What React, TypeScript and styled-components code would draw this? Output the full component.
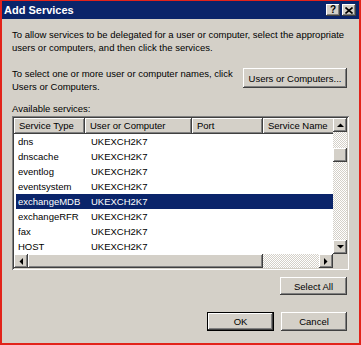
import React from 'react';
import styled, { createGlobalStyle, css } from 'styled-components';

const Global = createGlobalStyle`
  html, body { margin: 0; padding: 0; background: #fff; }
  *, *::before, *::after { box-sizing: border-box; }
`;

const FONT = `"Liberation Sans", Arial, sans-serif`;

const raised = css`
  background: #d4d0c8;
  box-shadow: inset -1px -1px #404040, inset 1px 1px #ffffff, inset -2px -2px #808080, inset 2px 2px #d4d0c8;
`;

const Frame = styled.div`
  width: 361px;
  height: 345px;
  border: 2px solid #e2231a;
  border-top-width: 1px;
  background: #d4d0c8;
  font-family: ${FONT};
  font-size: 9.5px;
  color: #000;
  display: flex;
  flex-direction: column;
  overflow: hidden;
`;

const TitleBar = styled.div`
  height: 18px;
  flex-shrink: 0;
  background: #0a246a;
  color: #fff;
  display: flex;
  align-items: center;
  justify-content: space-between;
  padding: 0 3px 0 2px;
`;

const TitleText = styled.span`
  font-weight: bold;
  font-size: 11px;
`;

const TitleButtons = styled.div`
  display: flex;
  gap: 2px;
`;

const CaptionButton = styled.div`
  ${raised};
  width: 14px;
  height: 12px;
  display: flex;
  align-items: center;
  justify-content: center;
  color: #000;
  font-weight: bold;
  font-size: 10px;
  line-height: 12px;
`;

const Body = styled.div`
  flex: 1;
  display: flex;
  flex-direction: column;
  padding: 9px 10px 0 10px;
`;

const Para = styled.p`
  margin: 0;
  line-height: 13px;
  white-space: nowrap;
`;

const SelectRow = styled.div`
  margin-top: 13px;
  display: flex;
  justify-content: space-between;
  align-items: flex-start;
`;

const PushButton = styled.div<{ $w: number; $h?: number; $default?: boolean }>`
  ${raised};
  width: ${(p) => p.$w}px;
  height: ${(p) => p.$h ?? 19}px;
  display: flex;
  align-items: center;
  justify-content: center;
  flex-shrink: 0;
  white-space: nowrap;
  ${(p) =>
    p.$default &&
    css`
      box-shadow: inset 0 0 0 1px #000, inset -2px -2px #404040, inset 2px 2px #ffffff, inset -3px -3px #808080;
    `}
`;

const UsersButton = styled(PushButton)`
  margin-top: 1px;
  margin-right: 2px;
`;

const Label = styled.div`
  margin-top: 9px;
  line-height: 13px;
`;

const ListBox = styled.div`
  margin-top: 1px;
  height: 154px;
  padding: 2px;
  background: #d4d0c8;
  box-shadow: inset 1px 1px #808080, inset -1px -1px #ffffff, inset 2px 2px #404040, inset -2px -2px #d4d0c8;
  display: grid;
  grid-template-columns: 1fr 14px;
  grid-template-rows: 1fr 14px;
`;

const ListContent = styled.div`
  background: #fff;
  overflow: hidden;
`;

const Header = styled.div`
  display: flex;
  height: 16px;
  background: #d4d0c8;
`;

const HeaderCell = styled.div<{ $w: number }>`
  width: ${(p) => p.$w}px;
  flex-shrink: 0;
  height: 16px;
  line-height: 16px;
  padding-left: 5px;
  white-space: nowrap;
  overflow: hidden;
  box-shadow: inset -1px -1px #404040, inset 1px 1px #ffffff, inset -2px -2px #808080;
`;

const Row = styled.div<{ $sel?: boolean }>`
  display: flex;
  height: 15px;
  line-height: 15px;
  background: ${(p) => (p.$sel ? '#0a246a' : 'transparent')};
  color: ${(p) => (p.$sel ? '#fff' : '#000')};
  margin-left: 2px;
  white-space: nowrap;
`;

const Cell = styled.div<{ $w: number; $pad: number }>`
  width: ${(p) => p.$w}px;
  flex-shrink: 0;
  padding-left: ${(p) => p.$pad}px;
  overflow: hidden;
`;

const track = css`
  background-color: #ebe9e4;
  background-image: repeating-conic-gradient(#d4d0c8 0 25%, #ffffff 0 50%);
  background-size: 2px 2px;
`;

const VScroll = styled.div`
  display: flex;
  flex-direction: column;
  ${track};
`;

const HScroll = styled.div`
  display: flex;
  ${track};
`;

const ScrollArrow = styled.div`
  ${raised};
  width: 14px;
  height: 14px;
  flex-shrink: 0;
  display: flex;
  align-items: center;
  justify-content: center;
`;

const VThumb = styled.div`
  ${raised};
  height: 14px;
  margin-top: 16px;
`;

const Spacer = styled.div`
  flex: 1;
`;

const HThumb = styled.div`
  ${raised};
  width: 235px;
  height: 14px;
`;

const Corner = styled.div`
  background: #d4d0c8;
`;

const SelectAllRow = styled.div`
  margin-top: 7px;
  display: flex;
  justify-content: flex-end;
  padding-right: 2px;
`;

const Footer = styled.div`
  margin-top: 17px;
  display: flex;
  justify-content: flex-end;
  gap: 7px;
  padding-right: 2px;
`;

type Dir = 'up' | 'down' | 'left' | 'right';
const Arrow = ({ dir }: { dir: Dir }) => {
  const pts: Record<Dir, string> = {
    up: '0,4 7,4 3.5,0.5',
    down: '0,0 7,0 3.5,3.5',
    left: '4,0 4,7 0.5,3.5',
    right: '0,0 0,7 3.5,3.5',
  };
  const vert = dir === 'up' || dir === 'down';
  return (
    <svg width={vert ? 7 : 4} height={vert ? 4 : 7} viewBox={vert ? '0 0 7 4' : '0 0 4 7'}>
      <polygon points={pts[dir]} fill="#000" />
    </svg>
  );
};

const columns = [
  { title: 'Service Type', w: 71 },
  { title: 'User or Computer', w: 107 },
  { title: 'Port', w: 71 },
  { title: 'Service Name', w: 85 },
];

const services = ['dns', 'dnscache', 'eventlog', 'eventsystem', 'exchangeMDB', 'exchangeRFR', 'fax', 'HOST'];

export default function App() {
  return (
    <>
      <Global />
      <Frame>
        <TitleBar>
          <TitleText>Add Services</TitleText>
          <TitleButtons>
            <CaptionButton>?</CaptionButton>
            <CaptionButton>
              <svg width="8" height="7" viewBox="0 0 8 7">
                <path d="M0.5 0.5 L7.5 6.5 M7.5 0.5 L0.5 6.5" stroke="#000" strokeWidth="1.6" />
              </svg>
            </CaptionButton>
          </TitleButtons>
        </TitleBar>
        <Body>
          <Para>
            To allow services to be delegated for a user or computer, select the appropriate
            <br />
            users or computers, and then click the services.
          </Para>
          <SelectRow>
            <Para>
              To select one or more user or computer names, click
              <br />
              Users or Computers.
            </Para>
            <UsersButton $w={104} $h={20}>Users or Computers...</UsersButton>
          </SelectRow>
          <Label>Available services:</Label>
          <ListBox>
            <ListContent>
              <Header>
                {columns.map((c) => (
                  <HeaderCell key={c.title} $w={c.w}>
                    {c.title}
                  </HeaderCell>
                ))}
              </Header>
              {services.map((s) => (
                <Row key={s} $sel={s === 'exchangeMDB'}>
                  <Cell $w={69} $pad={2}>{s}</Cell>
                  <Cell $w={107} $pad={6}>UKEXCH2K7</Cell>
                  <Cell $w={71} $pad={6} />
                  <Cell $w={85} $pad={6} />
                </Row>
              ))}
            </ListContent>
            <VScroll>
              <ScrollArrow>
                <Arrow dir="up" />
              </ScrollArrow>
              <VThumb />
              <Spacer />
              <ScrollArrow>
                <Arrow dir="down" />
              </ScrollArrow>
            </VScroll>
            <HScroll>
              <ScrollArrow>
                <Arrow dir="left" />
              </ScrollArrow>
              <HThumb />
              <Spacer />
              <ScrollArrow>
                <Arrow dir="right" />
              </ScrollArrow>
            </HScroll>
            <Corner />
          </ListBox>
          <SelectAllRow>
            <PushButton $w={67} $h={18}>Select All</PushButton>
          </SelectAllRow>
          <Footer>
            <PushButton $w={67} $default>OK</PushButton>
            <PushButton $w={66}>Cancel</PushButton>
          </Footer>
        </Body>
      </Frame>
    </>
  );
}
